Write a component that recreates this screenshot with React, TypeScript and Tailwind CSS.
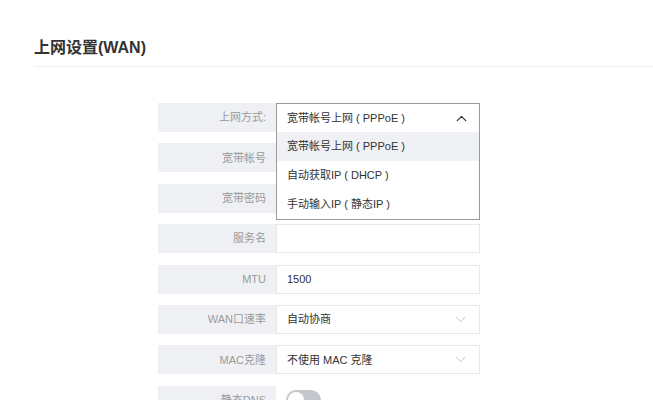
import React from 'react';
import { ChevronDown, ChevronUp } from 'lucide-react';

const font = { fontFamily: '"Liberation Sans", "Noto Sans CJK SC", sans-serif' };

function Row({ label, children, plain }: { label: string; children?: React.ReactNode; plain?: boolean }) {
  return (
    <div className="flex h-[29px]">
      <div className="w-[118px] shrink-0 bg-[#eef0f3] flex items-center justify-end pr-[10px] text-[11px] text-[#9a9a9a]">
        {label}
      </div>
      {plain ? (
        <div className="flex items-center pl-[10px]">{children}</div>
      ) : (
        <div className="w-[204px] border border-[#e6e8eb] bg-white flex items-center px-[10px] text-[11px] text-[#333]">
          {children}
        </div>
      )}
    </div>
  );
}

export default function App() {
  return (
    <div className="w-[653px] h-[400px] bg-white overflow-hidden" style={font}>
      <div className="pl-[34px] pt-[38px]">
        <h1 className="text-[16px] leading-[20px] font-semibold text-[#333]">上网设置(WAN)</h1>
        <div className="mt-[8px] h-px bg-[#eeeeee]" />
      </div>

      <div className="ml-[158px] mt-[36px] flex flex-col gap-[11.4px]">
        <div className="relative flex h-[29px]">
          <div className="w-[118px] shrink-0 bg-[#eef0f3] flex items-center justify-end pr-[10px] text-[11px] text-[#9a9a9a]">
            上网方式:
          </div>
          <div className="w-[204px] border border-[#9a9a9a] border-b-0 bg-white flex items-center justify-between pl-[10px] pr-[9px] text-[11px] text-[#333]">
            <span>宽带帐号上网 ( PPPoE )</span>
            <ChevronUp size={17} strokeWidth={1.8} className="text-[#333]" />
          </div>
          <div className="absolute left-[118px] top-[29px] w-[204px] border border-[#9a9a9a] border-t-0 bg-white z-10 text-[11px] text-[#333]">
            <div className="h-[29px] flex items-center px-[10px] bg-[#f0f1f4]">宽带帐号上网 ( PPPoE )</div>
            <div className="h-[29px] flex items-center px-[10px]">自动获取IP ( DHCP )</div>
            <div className="h-[29px] flex items-center px-[10px]">手动输入IP ( 静态IP )</div>
          </div>
        </div>
        <Row label="宽带帐号" />
        <Row label="宽带密码" />
        <Row label="服务名" />
        <Row label="MTU">1500</Row>
        <Row label="WAN口速率">
          <div className="flex w-full items-center justify-between">
            <span>自动协商</span>
            <ChevronDown size={17} strokeWidth={1.2} className="text-[#b8bcc2]" />
          </div>
        </Row>
        <Row label="MAC克隆">
          <div className="flex w-full items-center justify-between">
            <span>不使用 MAC 克隆</span>
            <ChevronDown size={17} strokeWidth={1.2} className="text-[#b8bcc2]" />
          </div>
        </Row>
        <Row label="静态DNS" plain>
          <div className="relative w-[35px] h-[20px] rounded-full bg-[#c4c8ce]">
            <div className="absolute left-[2px] top-[2px] w-[16px] h-[16px] rounded-full bg-white" />
          </div>
        </Row>
      </div>
    </div>
  );
}
